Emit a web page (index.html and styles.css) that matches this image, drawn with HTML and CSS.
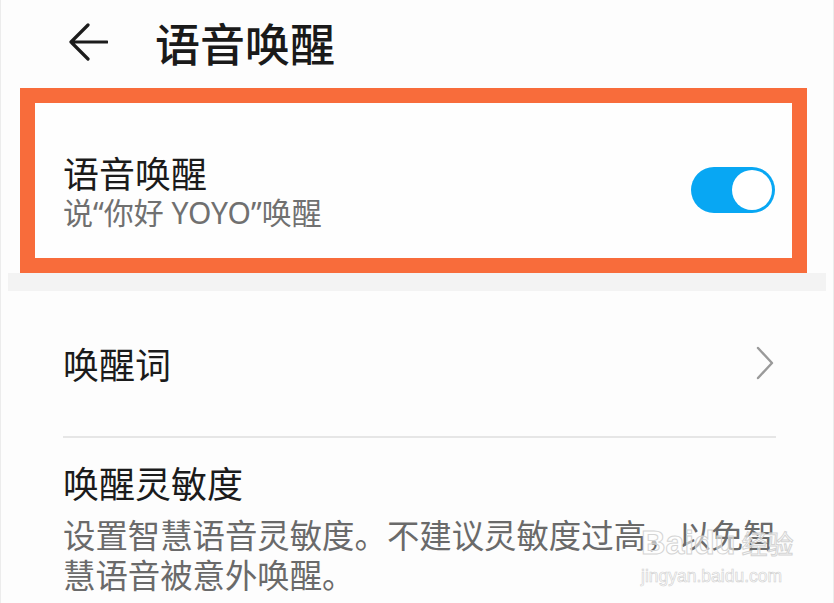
FILE: index.html
```html
<!DOCTYPE html>
<html lang="zh-CN">
<head>
<meta charset="utf-8">
<link rel="stylesheet" href="styles.css">
</head>
<body>
<div class="page">
  <header class="topbar">
    <svg class="back" viewBox="0 0 40 38" width="40" height="38">
      <path d="M20 2 L3 19 L20 36 M3 19 L39 19" fill="none" stroke="#1c1c1c" stroke-width="3.2" stroke-linecap="round" stroke-linejoin="round"/>
    </svg>
    <h1 class="title">语音唤醒</h1>
  </header>

  <section class="highlight">
    <div class="switch-row">
      <div class="texts">
        <div class="row-title">语音唤醒</div>
        <div class="row-sub">说“你好 YOYO”唤醒</div>
      </div>
      <div class="toggle"><span class="knob"></span></div>
    </div>
  </section>

  <div class="gap"></div>

  <section class="list">
    <div class="link-row">
      <div class="row-title">唤醒词</div>
      <svg class="chev" viewBox="0 0 18 34" width="18" height="34">
        <path d="M2 2 L16 17 L2 32" fill="none" stroke="#9a9a9a" stroke-width="2.4" stroke-linecap="round" stroke-linejoin="round"/>
      </svg>
    </div>
    <div class="divider"></div>
    <div class="sens-row">
      <div class="row-title">唤醒灵敏度</div>
      <div class="row-desc">设置智慧语音灵敏度。不建议灵敏度过高，以免智慧语音被意外唤醒。</div>
    </div>
  </section>

  <div class="watermark">
    <div class="wm-logo">Baidu<span class="wm-cn">经验</span></div>
    <div class="wm-url">jingyan.baidu.com</div>
  </div>
</div>
</body>
</html>
```

FILE: styles.css
```css
* { box-sizing: border-box; margin: 0; padding: 0; }
html, body { background: #fdfdfd; }
body {
  width: 834px;
  height: 603px;
  overflow: hidden;
  font-family: "Noto Sans CJK SC", "Noto Sans", sans-serif;
  color: #1b1b1b;
}
.page {
  position: relative;
  width: 834px;
  height: 603px;
  border-left: 1px solid #ececec;
  border-right: 1px solid #ececec;
}
.topbar {
  height: 88px;
  display: flex;
  align-items: center;
  padding-left: 67px;
  padding-bottom: 4px;
}
.back { display: block; }
.title {
  margin-left: 47px;
  font-size: 45px;
  font-weight: 500;
  line-height: 1;
  color: #1a1a1a;
}
.highlight {
  margin-left: 19px;
  width: 787px;
  height: 185px;
  border: 15px solid #f86c3b;
  background: #fefefe;
  position: relative;
  z-index: 1;
}
.switch-row {
  height: 100%;
  display: flex;
  align-items: center;
  justify-content: space-between;
  padding: 0 17px 0 28px;
}
.texts { margin-top: 22px; }
.row-title {
  font-size: 36px;
  line-height: 48px;
  font-weight: 400;
  color: #1b1b1b;
}
.switch-row .row-title { line-height: 42px; }
.row-sub {
  font-family: "Noto Sans", "Noto Sans CJK SC", sans-serif;
  font-size: 30px;
  line-height: 38px;
  color: #707070;
  margin-top: 1px;
}
.toggle {
  width: 84px;
  height: 46px;
  border-radius: 23px;
  background: #08a7f3;
  position: relative;
  margin-top: 18px;
}
.knob {
  position: absolute;
  right: 3px;
  top: 3px;
  width: 40px;
  height: 40px;
  border-radius: 50%;
  background: #fff;
}
.gap {
  height: 18px;
  margin: 0 7px;
  background: #f3f3f3;
}
.list {
  padding: 0 57px 0 62px;
}
.link-row {
  height: 145px;
  display: flex;
  align-items: center;
  justify-content: space-between;
  padding-bottom: 2px;
}
.chev { margin-right: 2px; }
.divider {
  height: 2px;
  background: #e6e6e6;
}
.sens-row { padding-top: 20px; }
.row-desc {
  font-size: 32.4px;
  line-height: 40px;
  color: #6a6a6a;
  margin-top: 8px;
}
.watermark {
  position: absolute;
  left: 640px;
  top: 522px;
  white-space: nowrap;
  color: rgba(255, 255, 255, 0.55);
  -webkit-text-stroke: 1px #d4d4d4;
}
.wm-logo {
  font-family: "Liberation Sans", sans-serif;
  font-size: 34px;
  line-height: 40px;
  font-weight: 700;
}
.wm-cn {
  font-family: "Noto Sans CJK SC", sans-serif;
  font-size: 26px;
  font-weight: 400;
  margin-left: 6px;
}
.wm-url {
  font-family: "Liberation Sans", sans-serif;
  font-size: 17.5px;
  line-height: 22px;
  margin-top: 2px;
  -webkit-text-stroke: 0.6px #d0d0d0;
}
```
